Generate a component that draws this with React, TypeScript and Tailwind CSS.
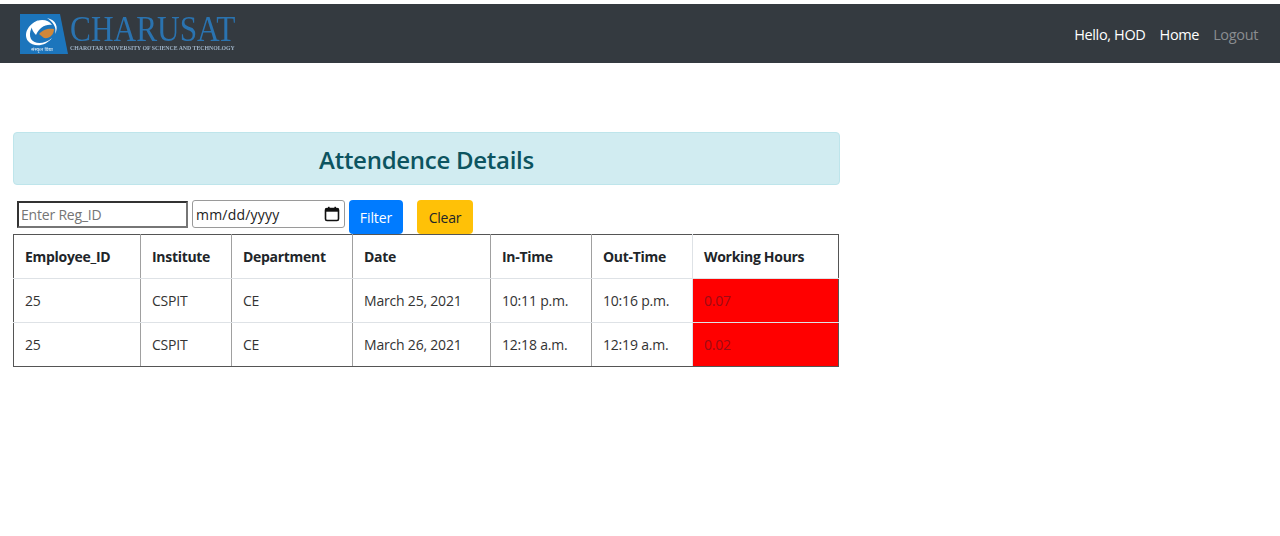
const font = { fontFamily: '"Open Sans", "Noto Sans", sans-serif' };

function Logo() {
  return (
    <div className="flex items-stretch h-[40px] w-[215px] blur-[0.4px]">
      <svg width="50" height="40" viewBox="0 0 50 40" className="shrink-0">
        <polygon points="1,0 41,0 49,40 1,40" fill="#1c75bc" />
        <path d="M9 27 C4 20 9 10 20 6 C13 11 9 18 12 25 C16 31 26 30 33 24 C27 32 15 34 9 27Z" fill="#fff" />
        <path d="M13 11 C19 4 29 5 33 11 C26 10 20 14 17 21 C14 18 12 14 13 11Z" fill="#fff" />
        <path d="M20 20 C24 15 30 14 35 15 C35 21 30 25 25 24Z" fill="#d0873a" />
        <path d="M28 4 C37 6 40 13 36 20 C38 13 34 8 28 4Z" fill="#fff" />
        <text x="23" y="36.5" fontSize="5" fill="#e8f1f8" textAnchor="middle" fontFamily="'Noto Sans', sans-serif">संस्कृत विद्या</text>
      </svg>
      <div className="flex flex-col ml-[1px] min-w-0">
        <span className="text-[36px] leading-[31px] h-[31px] text-[#2a73b0] whitespace-nowrap origin-left scale-x-[0.87]" style={{ fontFamily: '"Liberation Serif", serif' }}>CHARUSAT</span>
        <span className="text-[5.8px] leading-[7px] text-[#9fb3c6] font-bold whitespace-nowrap" style={{ fontFamily: '"Liberation Serif", serif' }}>CHAROTAR UNIVERSITY OF SCIENCE AND TECHNOLOGY</span>
      </div>
    </div>
  );
}

const rows = [
  ["25", "CSPIT", "CE", "March 25, 2021", "10:11 p.m.", "10:16 p.m.", "0.07"],
  ["25", "CSPIT", "CE", "March 26, 2021", "12:18 a.m.", "12:19 a.m.", "0.02"],
];
const heads = ["Employee_ID", "Institute", "Department", "Date", "In-Time", "Out-Time", "Working Hours"];
const widths = ["w-[127px]", "w-[91px]", "w-[121px]", "w-[138px]", "w-[101px]", "w-[101px]", "w-[146px]"];

export default function App() {
  return (
    <div className="min-h-[536px] bg-white pt-[4px] text-[#212529]" style={font}>
      <nav className="h-[59px] bg-[#343a40] flex items-center justify-between pl-[19px] pr-[21px]">
        <Logo />
        <div className="flex items-center gap-[14px] pt-[2px] pr-[1px] text-[14.5px] tracking-[-0.35px] text-white">
          <span>Hello, HOD</span>
          <span>Home</span>
          <span className="text-[#8a8d90]">Logout</span>
        </div>
      </nav>

      <div className="w-[827px] ml-[13px] mt-[69px]">
        <div className="h-[53px] pt-[2px] rounded-[4px] bg-[#d1ecf1] border border-[#bee5eb] flex items-center justify-center text-[#0c5460] text-[24px] font-semibold tracking-[-0.28px]">
          Attendence Details
        </div>

        <div className="flex items-start h-[49px] pt-[15px] pl-[4px]">
          <input
            placeholder="Enter Reg_ID"
            className="w-[171px] h-[27px] mt-[1px] border-2 border-t-[#333] border-l-[#333] border-r-[#767676] border-b-[#767676] px-[2px] text-[14px] tracking-[-0.2px] placeholder:text-[#757575] outline-none"
          />
          <div className="w-[153px] h-[28px] ml-[4px] border border-[#9a9a9a] rounded-[3px] flex items-center justify-between pl-[3px] pr-[4px] text-[14px] tracking-[0.2px] text-[#222]">
            <span>mm/dd/yyyy</span>
            <svg width="16" height="16" viewBox="0 0 16 16" fill="none">
              <rect x="1.5" y="2.5" width="13" height="12" rx="1.5" stroke="#111" strokeWidth="1.6" />
              <rect x="1.5" y="2.5" width="13" height="3.2" fill="#111" />
              <rect x="4" y="0.8" width="1.6" height="2.5" fill="#111" />
              <rect x="10.4" y="0.8" width="1.6" height="2.5" fill="#111" />
            </svg>
          </div>
          <button className="w-[54px] h-[34px] ml-[4px] rounded-[4px] bg-[#007bff] text-white text-[14px] tracking-[-0.1px]">Filter</button>
          <button className="w-[56px] h-[34px] ml-[14px] rounded-[4px] bg-[#ffc107] text-[#212529] text-[14px] tracking-[-0.2px]">Clear</button>
        </div>

        <table className="w-[825px] table-fixed border-collapse border border-[#555] text-[14px] tracking-[-0.2px]">
          <colgroup>
            {widths.map((w, i) => <col key={i} className={w} />)}
          </colgroup>
          <thead>
            <tr className="h-[44px]">
              {heads.map((h) => (
                <th key={h} className="text-left font-bold tracking-[-0.3px] pl-[11px] pr-[4px] border-l border-l-[#a0a0a0] border-b border-b-[#dee2e6] first:border-l-[#555] last:border-l-[#dee2e6]">{h}</th>
              ))}
            </tr>
          </thead>
          <tbody>
            {rows.map((r, ri) => {
              const bottom = ri === rows.length - 1 ? "border-b-[#555]" : "border-b-[#dee2e6]";
              return (
                <tr key={ri} className="h-[44px]">
                  {r.map((c, i) => (
                    <td
                      key={i}
                      className={
                        i === 6
                          ? `pl-[11px] pr-[4px] bg-[#ff0000] text-[#9c0b14] border-l border-l-[#dee2e6] border-b ${bottom}`
                          : `pl-[11px] pr-[4px] text-[#333] border-l border-l-[#a0a0a0] border-b first:border-l-[#555] ${bottom}`
                      }
                    >
                      {c}
                    </td>
                  ))}
                </tr>
              );
            })}
          </tbody>
        </table>
      </div>
    </div>
  );
}
